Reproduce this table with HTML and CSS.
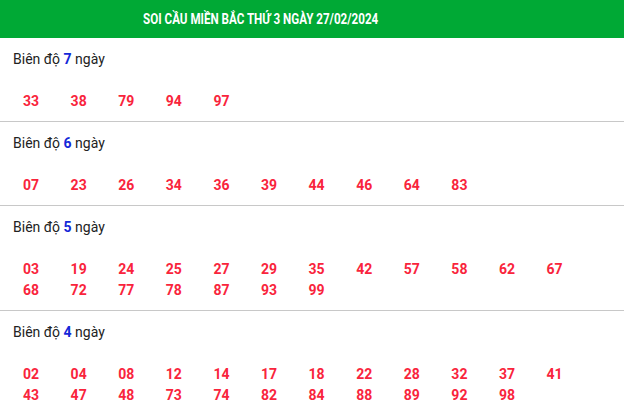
FILE: index.html
```html
<!DOCTYPE html>
<html lang="vi">
<head>
<meta charset="UTF-8">
<meta name="viewport" content="width=device-width, initial-scale=1.0">
<title>Soi cầu miền Bắc</title>
<link rel="stylesheet" href="styles.css">
</head>
<body>
<div class="soicau">
  <h2 class="title"><span>SOI CẦU MIỀN BẮC THỨ 3 NGÀY 27/02/2024</span></h2>

  <div class="block">
    <div class="label">Biên độ <b>7</b> ngày</div>
    <div class="nums">
      <span>33</span><span>38</span><span>79</span><span>94</span><span>97</span>
    </div>
  </div>

  <div class="block">
    <div class="label">Biên độ <b>6</b> ngày</div>
    <div class="nums">
      <span>07</span><span>23</span><span>26</span><span>34</span><span>36</span>
      <span>39</span><span>44</span><span>46</span><span>64</span><span>83</span>
    </div>
  </div>

  <div class="block">
    <div class="label">Biên độ <b>5</b> ngày</div>
    <div class="nums">
      <span>03</span><span>19</span><span>24</span><span>25</span><span>27</span><span>29</span>
      <span>35</span><span>42</span><span>57</span><span>58</span><span>62</span><span>67</span>
      <span>68</span><span>72</span><span>77</span><span>78</span><span>87</span><span>93</span>
      <span>99</span>
    </div>
  </div>

  <div class="block last">
    <div class="label">Biên độ <b>4</b> ngày</div>
    <div class="nums">
      <span>02</span><span>04</span><span>08</span><span>12</span><span>14</span><span>17</span>
      <span>18</span><span>22</span><span>28</span><span>32</span><span>37</span><span>41</span>
      <span>43</span><span>47</span><span>48</span><span>73</span><span>74</span><span>82</span>
      <span>84</span><span>88</span><span>89</span><span>92</span><span>98</span>
    </div>
  </div>
</div>
</body>
</html>
```

FILE: styles.css
```css
body {
  margin: 0;
  font-family: Roboto, "Liberation Sans", Arial, sans-serif;
  background: #fff;
}

.title {
  margin: 0;
  height: 38px;
  line-height: 38px;
  padding-right: 102px;
  background-color: #00a935;
  color: #fff;
  text-align: center;
  font-size: 14px;
  font-weight: bold;
}

.title span {
  display: inline-block;
  transform: scaleX(0.83); /* condensed look */
}

.block {
  padding: 11px 0 9px;
  border-bottom: 1px solid #c8c8c8;
}

.block.last {
  border-bottom: none;
}

.label {
  padding-left: 13px;
  font-size: 14px;
  line-height: 20px;
  color: #222;
}

.label b {
  color: #1428d8;
}

.nums {
  display: flex;
  flex-wrap: wrap;
  margin-top: 22px;
  padding-left: 23px;
}

.nums span {
  width: 47.6px;
  font-size: 14px;
  line-height: 21px;
  font-weight: bold;
  color: #f9243c;
}
```
